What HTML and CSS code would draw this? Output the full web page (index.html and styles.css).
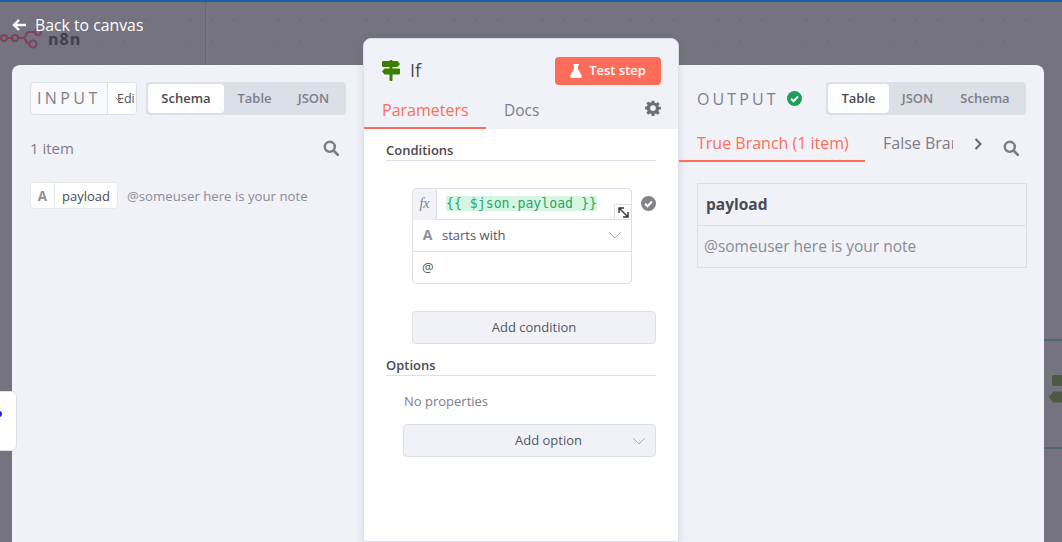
FILE: index.html
```html
<!DOCTYPE html>
<html lang="en">
<head>
<meta charset="utf-8">
<title>If</title>
<link rel="stylesheet" href="styles.css">
</head>
<body>
<div class="canvas-bg">
  <span class="bg-vline"></span>
  <span class="bg-hline bg-hline-a"></span>
  <span class="bg-hline bg-hline-b"></span>
  <span class="bg-node bg-node-a"></span>
  <svg class="bg-node-b" width="14" height="12" viewBox="0 0 14 12"><path d="M0 6 4 .5h10v11H4z" fill="#4d5a43"/></svg>
  <div class="logo">
    <svg width="42" height="24" viewBox="0 0 42 24" fill="none" stroke="#7d4258" stroke-width="2"><circle cx="4" cy="10" r="3"/><circle cx="15" cy="10" r="3"/><circle cx="33" cy="16" r="3.500"/><circle cx="38" cy="4" r="3"/><path d="M7 10h5M18 10h5c4 0 2-6 6-6h6M23 10c4 0 2 6 6.500 6"/></svg>
    <span class="logo-text">n8n</span>
  </div>
</div>
<header class="topbar">
  <a class="back">
    <svg width="14" height="12" viewBox="0 0 14 12" fill="none" stroke="#fff" stroke-width="2.400"><path d="M14 6H2.500M7 1 2 6l5 5"/></svg>
    <span>Back to canvas</span>
  </a>
</header>
<div class="side-tab"><span class="side-dot"></span></div>
<main class="panel">
  <section class="col-input">
    <div class="head-row">
      <div class="input-select">
        <span class="input-label">INPUT</span>
        <span class="input-edit"><span>Edi</span><svg class="edit-caret" width="8" height="5" viewBox="0 0 8 5" fill="none" stroke="#8f8f99"><path d="m.5.500 3.500 3.500 3.500-3.500"/></svg></span>
      </div>
      <div class="seg seg-input">
        <span class="seg-item seg-active seg-schema">Schema</span>
        <span class="seg-item seg-table">Table</span>
        <span class="seg-item seg-json">JSON</span>
      </div>
    </div>
    <div class="count-row">
      <span class="count">1 item</span>
      <svg class="search" width="16" height="16" viewBox="0 0 16 16" fill="none" stroke="#7d7d87" stroke-width="2.500"><circle cx="6.800" cy="6.800" r="5"/><path d="m10.500 10.500 4.500 4.500" stroke-linecap="round"/></svg>
    </div>
    <div class="schema-row">
      <span class="pill"><span class="pill-icon">A</span><span class="pill-text">payload</span></span>
      <span class="schema-value">@someuser here is your note</span>
    </div>
  </section>

  <section class="col-center">
    <div class="center-head">
      <div class="title-row">
        <svg class="if-icon" width="20" height="21" viewBox="0 0 20 21" fill="#3d7d00"><rect x="8.500" y="0" width="3" height="21" rx="1"/><path d="M2 1h14.500L19 4l-2.500 3H2a1 1 0 0 1-1-1V2a1 1 0 0 1 1-1z"/><path d="M18 8.500H3.500L1 11.500l2.500 3H18a1 1 0 0 0 1-1v-4a1 1 0 0 0-1-1z"/></svg>
        <span class="title">If</span>
        <button class="test-btn">
          <svg width="12" height="14" viewBox="0 0 12 14" fill="#fff"><path d="M3 0h6v1.200H8V5l3.700 6.500c.5 1-.1 2.500-1.400 2.500H1.700C.4 14-.2 12.500.3 11.500L4 5V1.200H3z"/></svg>
          <span>Test step</span>
        </button>
      </div>
      <div class="tabs">
        <span class="tab tab-active">Parameters</span>
        <span class="tab tab-docs">Docs</span>
        <svg class="gear" width="16" height="16" viewBox="0 0 24 24" fill="#6f6f79"><path fill-rule="evenodd" d="M10 1h4l.6 3.200 1.900.8 2.700-1.900 2.800 2.800-1.900 2.700.8 1.900L24 10v4l-3.100.6-.8 1.900 1.900 2.700-2.800 2.800-2.700-1.900-1.900.8L14 24h-4l-.6-3.100-1.900-.8-2.700 1.900-2.800-2.800 1.900-2.700-.8-1.900L0 14v-4l3.100-.6.800-1.900L2 4.900l2.800-2.800L7.500 4l1.900-.8zM12 8a4.200 4.200 0 1 0 0 8.400A4.200 4.200 0 0 0 12 8z"/></svg>
      </div>
    </div>
    <div class="center-body">
      <div class="section-title">Conditions</div>
      <div class="condition-row">
        <div class="condition">
          <div class="cond-line cond-expr">
            <span class="fx">fx</span>
            <span class="expr"><span class="expr-hl">{{ $json.payload }}</span></span>
            <span class="expand"><svg width="11" height="11" viewBox="0 0 11 11" fill="none" stroke="#333" stroke-width="1.400"><path d="M1 6V1h5M1.500 1.500l8 8M10 5V10H5"/></svg></span>
          </div>
          <div class="cond-line cond-op">
            <span class="type-a">A</span>
            <span class="op-text">starts with</span>
            <svg class="chev" width="14" height="8" viewBox="0 0 14 8" fill="none" stroke="#a9adb8"><path d="m1 1 6 6 6-6"/></svg>
          </div>
          <div class="cond-line cond-val">@</div>
        </div>
        <svg class="check-grey" width="15" height="15" viewBox="0 0 15 15"><circle cx="7.500" cy="7.500" r="7.500" fill="#82828b"/><path d="m4 7.700 2.500 2.500L11 5.500" fill="none" stroke="#fff" stroke-width="2"/></svg>
      </div>
      <div class="add-cond-wrap"><button class="add-cond">Add condition</button></div>
      <div class="section-title section-options">Options</div>
      <div class="no-props">No properties</div>
      <div class="add-opt-wrap">
        <div class="add-opt"><span>Add option</span><svg class="chev" width="14" height="8" viewBox="0 0 14 8" fill="none" stroke="#a9adb8"><path d="m1 1 6 6 6-6"/></svg></div>
      </div>
    </div>
  </section>

  <section class="col-output">
    <div class="head-row output-head">
      <div class="output-title">
        <span class="output-label">OUTPUT</span>
        <svg width="15" height="15" viewBox="0 0 15 15"><circle cx="7.500" cy="7.500" r="7.500" fill="#1f9d5c"/><path d="m4 7.700 2.500 2.500L11 5.500" fill="none" stroke="#fff" stroke-width="2"/></svg>
      </div>
      <div class="seg seg-output">
        <span class="seg-item seg-active seg-otable">Table</span>
        <span class="seg-item seg-ojson">JSON</span>
        <span class="seg-item seg-oschema">Schema</span>
      </div>
    </div>
    <div class="branch-row">
      <span class="branch branch-active">True Branch (1 item)</span>
      <span class="branch branch-false"><span>False Branch</span></span>
      <svg class="branch-next" width="8" height="12" viewBox="0 0 8 12" fill="none" stroke="#666670" stroke-width="2"><path d="m1.500 1 5 5-5 5"/></svg>
      <svg class="search" width="16" height="16" viewBox="0 0 16 16" fill="none" stroke="#7d7d87" stroke-width="2.500"><circle cx="6.800" cy="6.800" r="5"/><path d="m10.500 10.500 4.500 4.500" stroke-linecap="round"/></svg>
    </div>
    <table class="data">
      <thead><tr><th>payload</th></tr></thead>
      <tbody><tr><td>@someuser here is your note</td></tr></tbody>
    </table>
  </section>
</main>
</body>
</html>
```
FILE: styles.css
```css
* { box-sizing: border-box; }
html, body { margin: 0; padding: 0; height: 100%; overflow: hidden; }
body {
  width: 1062px;
  height: 542px;
  position: relative;
  background: #75737f;
  border-top: 2px solid #1c5ba6;
  font-family: "Open Sans", sans-serif;
  color: #4a4a52;
}
.canvas-bg {
  position: absolute; inset: 0; overflow: hidden;
  background-image: radial-gradient(circle at 11px 11px, #6e6c78 1px, transparent 1.500px);
  background-size: 22px 22px;
  background-position: 3px 7px;
}
.bg-vline { position: absolute; left: 205px; top: 0; width: 1px; height: 64px; background: #686673; }
.bg-hline { position: absolute; left: 1044px; right: 0; height: 2px; background: #4f6a6a; }
.bg-hline-a { top: 337px; }
.bg-hline-b { top: 445px; }
.bg-node { position: absolute; left: 1052px; top: 373px; width: 12px; height: 11px; background: #4d5a43; border-radius: 2px; }
.bg-node-b { position: absolute; left: 1049px; top: 389px; }
.logo { position: absolute; left: 0; top: 26px; display: flex; align-items: center; gap: 6px; }
.logo-text { font-weight: 700; font-size: 16px; line-height: 20px; margin-top: -2px; color: #3f3e52; letter-spacing: 1px; }
.topbar { position: absolute; left: 12px; top: 12px; z-index: 3; }
.back { display: flex; align-items: center; gap: 9px; color: #fff; font-size: 16px; line-height: 22px; }
.back span { font-size: 15.800px; font-weight: 500; }

.side-tab {
  position: absolute; left: -10px; top: 389px; z-index: 3;
  width: 27px; height: 60px; background: #fff;
  border: 1px solid #dbdfe7; border-radius: 6px;
}
.side-dot { position: absolute; left: 5px; top: 19px; width: 6px; height: 6px; border-radius: 50%; background: #1a1aff; }

.panel {
  position: absolute; left: 12px; top: 63px; width: 1032px; height: 477px;
  background: #f0f2f8; border-radius: 8px 8px 0 0;
  display: flex; align-items: stretch;
}
.col-input { width: 351px; padding: 17px 17px 0 18px; flex: none; }
.head-row { display: flex; align-items: center; gap: 9px; height: 33px; }
.input-select {
  display: flex; width: 107px; height: 33px;
  background: #f8f9fc; border: 1px solid #dbdfe7; border-radius: 4px; overflow: hidden;
}
.input-label { width: 76px; padding-left: 6px; font-size: 16px; line-height: 30px; letter-spacing: 3.400px; color: #7f7f89; flex: none; white-space: nowrap; overflow: hidden; }
.input-edit { position: relative; border-left: 1px solid #dbdfe7; background: #fff; flex: 1; font-size: 12.500px; line-height: 31px; color: #555; padding-left: 9px; overflow: hidden; }
.edit-caret { position: absolute; left: 7px; top: 14px; }
.seg { display: flex; background: #dbdfe7; border-radius: 4px; padding: 2px; height: 33px; font-size: 13px; font-weight: 600; color: #7d7d87; }
.seg-item { display: block; line-height: 29px; text-align: center; border-radius: 4px; }
.seg-active { background: #fff; color: #4a4a52; }
.seg-input { width: 200px; }
.seg-schema { width: 76px; }
.seg-table { width: 61px; }
.seg-json { width: 57px; }
.count-row { display: flex; justify-content: space-between; align-items: center; height: 24px; margin-top: 21px; padding-right: 7px; }
.count { font-size: 15px; color: #7d7d87; }
.schema-row { display: flex; align-items: center; margin-top: 22px; height: 27px; gap: 9px; }
.pill { display: flex; height: 27px; background: #fff; border: 1px solid #e6e8ef; border-radius: 4px; font-size: 13px; line-height: 26px; color: #4a4a52; }
.pill-icon { width: 24px; text-align: center; border-right: 1px solid #e6e8ef; font-weight: 700; color: #8f8f99; font-size: 13.500px; }
.pill-text { padding: 0 7px; }
.schema-value { font-size: 13.200px; line-height: 29px; padding-top: 2px; color: #8b8b95; }

.col-center {
  width: 316px; flex: none; margin-top: -27px; height: 504px;
  background: #fff; border: 1px solid #dbdfe7; border-radius: 8px 8px 0 0;
  box-shadow: 0 2px 8px rgba(70, 70, 100, 0.15); overflow: hidden;
}
.center-head { background: #f0f2f8; height: 90px; }
.title-row { display: flex; align-items: center; padding: 18px 17px 0 17px; height: 46px; }
.if-icon { margin-top: -2px; }
.title { font-size: 18px; line-height: 28px; margin-left: 9px; margin-top: -2px; color: #4a4a52; }
.test-btn {
  margin-left: auto; width: 106px; height: 28px; border: 0; border-radius: 4px; padding: 0 0 2px;
  background: #ff6d5a; color: #fff; display: flex; align-items: center; justify-content: center; gap: 7px;
  font-family: inherit; font-size: 13px; font-weight: 600;
}
.test-btn svg { margin-top: 2px; }
.tabs { display: flex; position: relative; height: 44px; padding-top: 15px; }
.tab { font-size: 15.500px; line-height: 20px; font-weight: 500; color: #7d7d87; }
.tab-active { width: 122px; height: 29px; padding-left: 18px; font-size: 16px; color: #ff6d5a; border-bottom: 2px solid #ff6d5a; }
.tab-docs { margin-left: 18px; }
.gear { position: absolute; right: 17px; top: 15px; }
.center-body { padding: 13px 22px 0 22px; }
.section-title { font-size: 13px; line-height: 16px; font-weight: 600; color: #4a4a52; border-bottom: 1px solid #dbdfe7; height: 19px; }
.condition-row { display: flex; margin: 27px 0 0 26px; gap: 10px; align-items: flex-start; }
.condition { width: 220px; height: 96px; border: 1px solid #dbdfe7; border-radius: 4px; overflow: hidden; background: #fff; flex: none; }
.cond-line { height: 32px; display: flex; align-items: center; border-bottom: 1px solid #dbdfe7; font-size: 13px; }
.cond-val { border-bottom: 0; padding: 0 0 2px 9px; height: 31px; color: #555; }
.cond-expr { position: relative; height: 31px; }
.cond-op { padding-bottom: 2px; }
.fx { width: 24px; height: 31px; background: #f0f2f8; border-right: 1px solid #dbdfe7; font-family: "Liberation Serif", serif; font-style: italic; font-size: 14px; line-height: 29px; text-align: center; color: #7d7d87; flex: none; }
.expr { padding-left: 9px; font-family: "DejaVu Sans Mono", monospace; font-size: 13.200px; color: #2ba568; margin-top: -1px; }
.expr-hl { background: #d6f5e3; }
.expand { position: absolute; right: 0; bottom: 0; width: 17px; height: 15px; background: #fff; border: 1px solid #dbdfe7; border-right: 0; border-bottom: 0; display: flex; align-items: center; justify-content: center; border-radius: 2px 0 0 0; }
.type-a { width: 28px; text-align: center; padding-left: 1px; font-weight: 700; font-size: 14px; color: #8f8f99; }
.op-text { color: #55555f; margin-left: 1px; }
.chev { margin-left: auto; margin-right: 9px; }
.check-grey { margin-top: 8px; flex: none; margin-left: -1px; }
.add-cond-wrap { margin: 27px 0 0 26px; }
.add-cond { display: block; width: 244px; height: 33px; background: #f0f2f8; border: 1px solid #dbdfe7; border-radius: 4px; font-family: inherit; font-size: 13px; line-height: 28px; padding: 0 0 2px; color: #55555f; }
.section-options { margin-top: 13px; }
.no-props { margin: 16px 0 0 18px; font-size: 13px; line-height: 18px; color: #7d7d87; }
.add-opt-wrap { margin: 14px 0 0 17px; }
.add-opt { display: flex; align-items: center; width: 253px; height: 33px; background: #f0f2f8; border: 1px solid #dbdfe7; border-radius: 4px; font-size: 13px; line-height: 28px; color: #55555f; padding-left: 111px; }
.add-opt span { margin-top: -2px; }

.col-output { flex: 1; padding: 17px 18px 0 18px; min-width: 0; }
.output-head { justify-content: space-between; }
.output-title { display: flex; align-items: center; gap: 8.500px; }
.output-label { font-size: 16px; letter-spacing: 3.100px; color: #7f7f89; }
.seg-output { width: 200px; }
.seg-otable { width: 61px; }
.seg-ojson { width: 57px; }
.seg-oschema { width: 78px; }
.branch-row { position: relative; display: flex; align-items: flex-start; height: 35px; margin-top: 12px; margin-left: -18px; }
.branch { font-size: 16px; line-height: 32px; font-weight: 500; }
.branch-active { width: 186px; height: 35px; padding-left: 18px; color: #ff6d5a; border-bottom: 2px solid #ff6d5a; flex: none; }
.branch-false { width: 70px; margin-left: 18px; white-space: nowrap; overflow: hidden; color: #7d7d87; flex: none; }
.branch-next { margin: 11px 0 0 21px; }
.branch-row .search { margin: 13px 0 0 21px; }
.data { width: 330px; margin-top: 21px; border-collapse: collapse; background: #f0f2f8; }
.data th, .data td { border: 1px solid #dbdfe7; text-align: left; height: 42px; padding: 0 0 1px; }
.data th { font-size: 15.500px; font-weight: 700; color: #4a4a52; padding-left: 8px; }
.data td { font-size: 15.500px; color: #8b8b95; padding-left: 6px; }
```
